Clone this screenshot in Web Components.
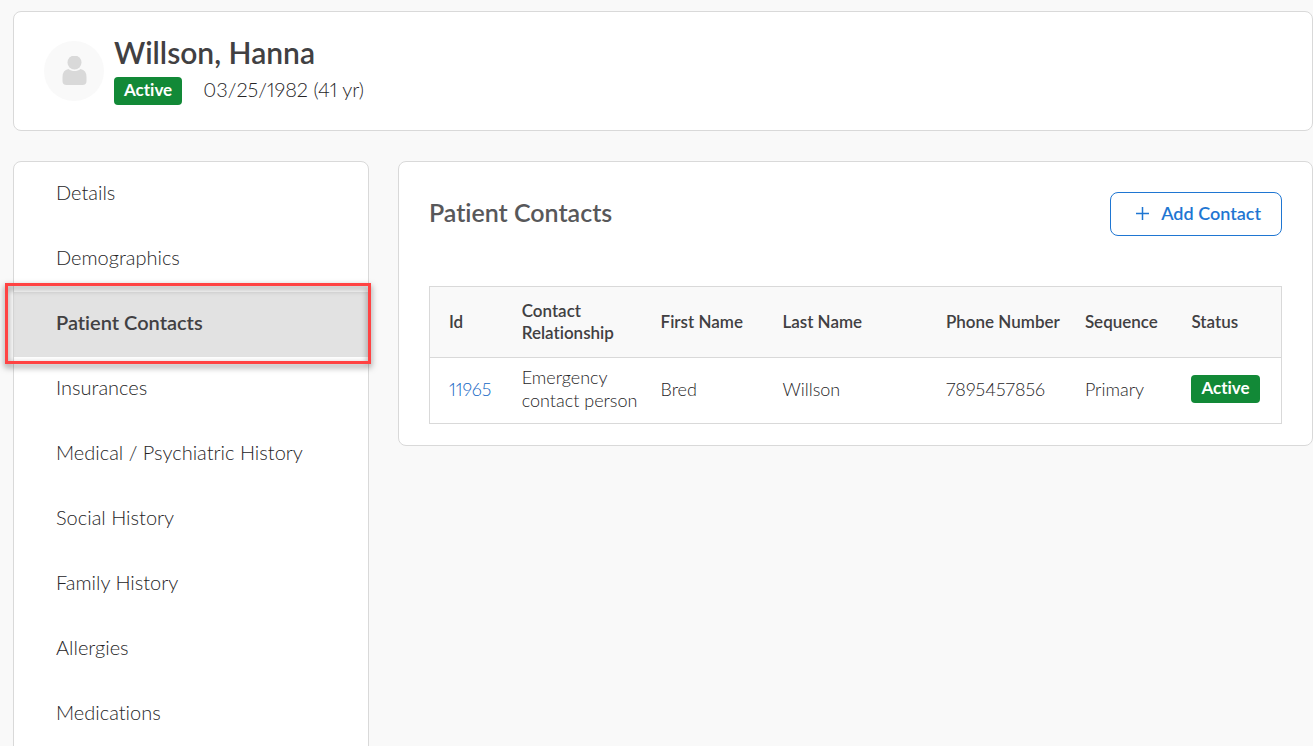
<!DOCTYPE html>
<html lang="en">
<head>
<meta charset="utf-8">
<meta name="viewport" content="width=device-width, initial-scale=1">
<title>Patient Contacts</title>
<style>
  body {
    margin: 0;
    background: #f9f9f9;
    color: #414042;
    font-family: Lato, "Open Sans", sans-serif;
    font-variant-ligatures: none;
    font-variant-numeric: proportional-nums;
    --line: #d9d9d9;
    --blue: #1f76d2;
    --link: #1266c4;
    --green: #128937;
    --light-text: #262527;
  }
</style>
</head>
<body>
<patient-page>
  <patient-header slot="header" name="Willson, Hanna" status="Active" born="03/25/1982 (41 yr)"></patient-header>
  <side-menu slot="menu" current="Patient Contacts"
    items="Details,Demographics,Patient Contacts,Insurances,Medical / Psychiatric History,Social History,Family History,Allergies,Medications"></side-menu>
  <content-panel heading="Patient Contacts">
    <add-button slot="action">Add Contact</add-button>
    <contacts-table></contacts-table>
  </content-panel>
</patient-page>

<script>
class PatientPage extends HTMLElement {
  constructor() {
    super();
    this.attachShadow({ mode: "open" });
  }

  connectedCallback() {
    this.shadowRoot.innerHTML = `
      <style>
        :host {
          display: flex;
          flex-direction: column;
          gap: 30px;
          box-sizing: border-box;
          height: 100vh;
          padding: 11px 0 0 13px;
          overflow: hidden;
        }

        .columns {
          display: grid;
          grid-template-columns: minmax(240px, 28fr) 72fr;
          gap: 29px;
          align-items: start;
        }

        main {
          min-width: 0;
        }
      </style>

      <slot name="header"></slot>
      <div class="columns">
        <slot name="menu"></slot>
        <main><slot></slot></main>
      </div>
    `;
  }
}

class StatusBadge extends HTMLElement {
  constructor() {
    super();
    this.attachShadow({ mode: "open" });
  }

  connectedCallback() {
    this.shadowRoot.innerHTML = `
      <style>
        :host {
          display: inline-block;
          padding: 0 10px 2px;
          border-radius: 4px;
          background: var(--green);
          color: white;
          font-size: 17px;
          font-weight: 700;
          line-height: 26px;
        }
      </style>
      <slot></slot>
    `;
  }
}

class PatientHeader extends HTMLElement {
  constructor() {
    super();
    this.attachShadow({ mode: "open" });
  }

  connectedCallback() {
    const name = this.getAttribute("name") || "";
    const status = this.getAttribute("status") || "";
    const born = this.getAttribute("born") || "";

    this.shadowRoot.innerHTML = `
      <style>
        :host {
          display: block;
        }

        header {
          display: flex;
          align-items: center;
          gap: 10px;
          padding: 24px 30px 25px;
          border: 1px solid var(--line);
          border-radius: 8px;
          background: white;
        }

        .avatar {
          display: flex;
          align-items: center;
          justify-content: center;
          width: 60px;
          height: 60px;
          border-radius: 50%;
          background: #f9f9f9;
        }

        svg {
          width: 26px;
          height: 30px;
        }

        h1 {
          margin: 0;
          font-size: 30px;
          font-weight: 600;
          line-height: 32px;
        }

        .meta {
          display: flex;
          align-items: flex-start;
          gap: 21px;
          padding-top: 9px;
          color: var(--light-text);
          font-size: 20px;
          font-weight: 300;
          line-height: 24px;
        }
      </style>

      <header>
        <div class="avatar">
          <svg viewBox="0 0 26 30" fill="#d9d9d9" aria-hidden="true">
            <circle cx="13.500" cy="6.500" r="7"/>
            <path d="M7.500 13c3.500 2.800 8.500 2.800 12 0q6 1 6 8v4q0 4-4 4h-16q-4 0-4-4v-4q0-7 6-8z"/>
          </svg>
        </div>
        <div>
          <h1>${name}</h1>
          <div class="meta">
            <status-badge>${status}</status-badge>
            <span>${born}</span>
          </div>
        </div>
      </header>
    `;
  }
}

class SideMenu extends HTMLElement {
  constructor() {
    super();
    this.attachShadow({ mode: "open" });
  }

  connectedCallback() {
    const current = this.getAttribute("current");
    const items = (this.getAttribute("items") || "").split(",");

    this.shadowRoot.innerHTML = `
      <style>
        :host {
          display: block;
        }

        nav {
          padding-bottom: 30px;
          border: 1px solid var(--line);
          border-radius: 8px;
          background: white;
        }

        a {
          display: block;
          position: relative;
          padding: 0 42px 4px;
          color: var(--light-text);
          font-size: 20px;
          font-weight: 300;
          line-height: 61px;
          text-decoration: none;
        }

        a[aria-current] {
          background: #e2e2e2;
          color: inherit;
          font-weight: 600;
        }

        /* highlight frame drawn over the current item */
        a[aria-current]::after {
          content: "";
          position: absolute;
          inset: -9px -3px -7px -9px;
          border: 3px solid #ff4343;
          filter: drop-shadow(0 3px 3px rgba(0,0,0,0.5));
          pointer-events: none;
        }
      </style>

      <nav>
        ${items.map(item => `<a href="#"${item === current ? ' aria-current="page"' : ""}>${item}</a>`).join("")}
      </nav>
    `;
  }
}

class ContentPanel extends HTMLElement {
  constructor() {
    super();
    this.attachShadow({ mode: "open" });
  }

  connectedCallback() {
    this.shadowRoot.innerHTML = `
      <style>
        :host {
          display: block;
        }

        section {
          padding: 30px 30px 21px;
          border: 1px solid var(--line);
          border-radius: 8px;
          background: white;
        }

        .top {
          display: flex;
          justify-content: space-between;
          align-items: flex-start;
          margin-bottom: 50px;
        }

        h2 {
          margin: 0;
          color: #58585a;
          font-size: 25px;
          font-weight: 600;
          line-height: 40px;
        }
      </style>

      <section>
        <div class="top">
          <h2>${this.getAttribute("heading") || ""}</h2>
          <slot name="action"></slot>
        </div>
        <slot></slot>
      </section>
    `;
  }
}

class AddButton extends HTMLElement {
  constructor() {
    super();
    this.attachShadow({ mode: "open" });
  }

  connectedCallback() {
    this.shadowRoot.innerHTML = `
      <style>
        :host {
          display: block;
        }

        button {
          display: flex;
          align-items: center;
          gap: 11px;
          height: 44px;
          padding: 0 20px 2px 24px;
          border: 1px solid var(--blue);
          border-radius: 8px;
          background: white;
          color: var(--blue);
          font-family: inherit;
          font-size: 18px;
          font-weight: 600;
          font-variant-ligatures: none;
          cursor: pointer;
        }

        svg {
          width: 15px;
          height: 15px;
        }
      </style>

      <button type="button">
        <svg viewBox="0 0 15 15" fill="none" stroke="currentColor" stroke-width="1.500" aria-hidden="true">
          <path d="M7.500 1v13M1 7.500h13"/>
        </svg>
        <slot></slot>
      </button>
    `;
  }
}

class ContactsTable extends HTMLElement {
  constructor() {
    super();
    this.attachShadow({ mode: "open" });
  }

  connectedCallback() {
    this.shadowRoot.innerHTML = `
      <style>
        :host {
          display: block;
        }

        table {
          width: 100%;
          table-layout: fixed;
          border-collapse: collapse;
          border: 1px solid var(--line);
        }

        th, td {
          box-sizing: border-box;
          padding: 8px 0 11px 19px;
          color: var(--light-text);
          font-size: 18px;
          font-weight: 300;
          line-height: 23px;
          text-align: left;
        }

        th {
          padding: 13px 0 13px 19px;
          border-bottom: 1px solid var(--line);
          background: #f9f9f9;
          color: inherit;
          font-size: 17px;
          font-weight: 600;
          line-height: 22px;
        }

        a {
          color: var(--link);
          text-decoration: none;
        }

        status-badge {
          vertical-align: middle;
        }

        .id { width: 8.6%; }
        .relationship { width: 16.3%; }
        .first { width: 14.3%; }
        .last { width: 19.2%; }
        .phone { width: 16.3%; }
        .sequence { width: 12.5%; }
      </style>

      <table>
        <thead>
          <tr>
            <th class="id">Id</th>
            <th class="relationship">Contact<br>Relationship</th>
            <th class="first">First Name</th>
            <th class="last">Last Name</th>
            <th class="phone">Phone Number</th>
            <th class="sequence">Sequence</th>
            <th>Status</th>
          </tr>
        </thead>
        <tbody>
          <tr>
            <td><a href="#">11965</a></td>
            <td>Emergency<br>contact person</td>
            <td>Bred</td>
            <td>Willson</td>
            <td>7895457856</td>
            <td>Primary</td>
            <td><status-badge>Active</status-badge></td>
          </tr>
        </tbody>
      </table>
    `;
  }
}

customElements.define("status-badge", StatusBadge);
customElements.define("patient-header", PatientHeader);
customElements.define("side-menu", SideMenu);
customElements.define("add-button", AddButton);
customElements.define("contacts-table", ContactsTable);
customElements.define("content-panel", ContentPanel);
customElements.define("patient-page", PatientPage);
</script>
</body>
</html>
